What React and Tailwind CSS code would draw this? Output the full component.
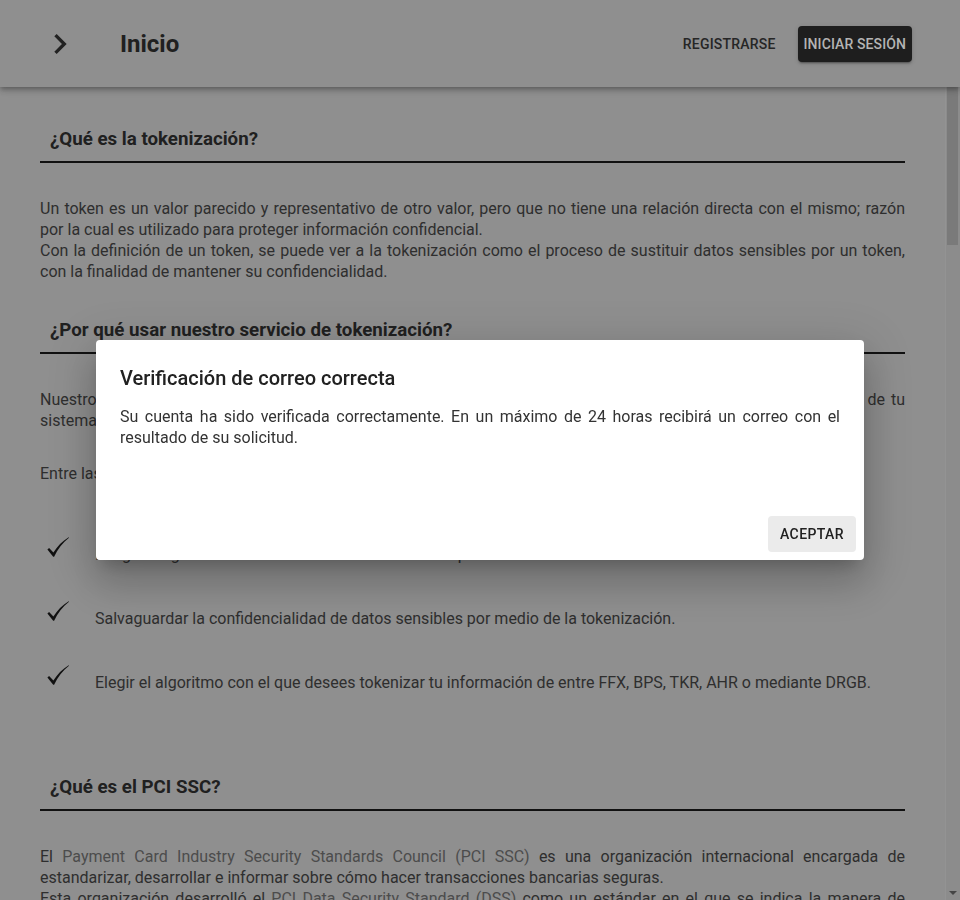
import React from "react";

const Check = () => (
  <span className="w-[55px] pl-[7px] mb-[14px] flex">
    <svg viewBox="0 0 22 20" className="w-[22px] h-[20px]" fill="#111">
      <path d="M0.4 12.4 L2.1 11.1 L6.4 15.6 C10.2 9.4 15.2 4.1 21.7 0.2 L22 0.7 C15.6 5.6 10.7 12 7.1 19.8 L6.2 19.8 Z" />
    </svg>
  </span>
);

const Heading = ({ children }) => (
  <h2 className="px-[10px] pb-[10px] text-[18.72px] leading-[24px] font-bold text-[#202020] border-b-2 border-[#111]">
    {children}
  </h2>
);

const ventajas = [
  "Integrar seguridad a tu sistema de manera sencilla por medio de nuestra API de tokenización.",
  "Salvaguardar la confidencialidad de datos sensibles por medio de la tokenización.",
  "Elegir el algoritmo con el que desees tokenizar tu información de entre FFX, BPS, TKR, AHR o mediante DRGB.",
];

export default function App() {
  return (
    <div className="relative h-[900px] overflow-hidden bg-[#8f8f8f] font-['Roboto',sans-serif] text-[#2e2e2e]">
      <header className="relative z-10 h-[87px] flex items-center pt-[1px] bg-[#8f8f8f] shadow-[0_2px_4px_-1px_rgba(0,0,0,0.2),0_4px_5px_0_rgba(0,0,0,0.14),0_1px_10px_0_rgba(0,0,0,0.12)]">
        <button className="ml-[40px] w-[40px] h-[40px] text-[#222]">
          <svg viewBox="0 0 24 24" className="w-[40px] h-[40px]" fill="currentColor">
            <path d="M10 6 8.59 7.41 13.17 12l-4.58 4.59L10 18l6-6z" />
          </svg>
        </button>
        <h1 className="ml-[40px] text-[24px] leading-[32px] font-bold text-[#202020]">
          Inicio
        </h1>
        <nav className="ml-auto mr-[48px] flex items-center gap-[14px]">
          <button className="h-9 px-2 text-[14px] font-medium uppercase tracking-[0.2px] text-[#262626]">
            Registrarse
          </button>
          <button className="h-9 px-[6px] rounded bg-[#1e1e1e] text-[14px] font-medium uppercase tracking-[0.1px] text-[#b4b4b4] shadow-[0_3px_1px_-2px_rgba(0,0,0,0.2),0_2px_2px_0_rgba(0,0,0,0.14),0_1px_5px_0_rgba(0,0,0,0.12)]">
            Iniciar sesión
          </button>
        </nav>
      </header>

      <div className="h-[813px] flex">
        <main className="flex-1 overflow-hidden">
          <div className="px-10 pt-[40px] pb-[60px] text-[16px] leading-[21px]">
            <section>
              <Heading>¿Qué es la tokenización?</Heading>
              <div className="mt-[35px] text-justify">
                <p>
                  Un token es un valor parecido y representativo de otro valor, pero que no tiene una relación directa con el mismo; razón por la cual es utilizado para proteger información confidencial.
                </p>
                <p>
                  Con la definición de un token, se puede ver a la tokenización como el proceso de sustituir datos sensibles por un token, con la finalidad de mantener su confidencialidad.
                </p>
              </div>
            </section>

            <section className="mt-[36px]">
              <Heading>¿Por qué usar nuestro servicio de tokenización?</Heading>
              <p className="mt-[35px] text-justify">
                Nuestro servicio de tokenización permite proteger la información sensible de tus clientes y mejorar la seguridad de tu sistema, además de ayudarte a cumplir con los requisitos del estándar PCI DSS.
              </p>
              <p className="mt-[32px]">Entre las ventajas que ofrecemos se encuentran:</p>
              <ul className="mt-[38px]">
                {ventajas.map((v) => (
                  <li key={v} className="h-16 flex items-center">
                    <Check />
                    <span>{v}</span>
                  </li>
                ))}
              </ul>
            </section>

            <section className="mt-[61px]">
              <Heading>¿Qué es el PCI SSC?</Heading>
              <div className="mt-[35px] text-justify">
                <p>
                  El <span className="text-[#4c4c4c]">Payment Card Industry Security Standards Council (PCI SSC)</span> es una organización internacional encargada de estandarizar, desarrollar e informar sobre cómo hacer transacciones bancarias seguras.
                </p>
                <p>
                  Esta organización desarrolló el <span className="text-[#4c4c4c]">PCI Data Security Standard (DSS)</span> como un estándar en el que se indica la manera de proteger los datos de los tarjetahabientes durante su almacenamiento, procesamiento y transmisión.
                </p>
              </div>
            </section>
          </div>
        </main>

        {/* scrollbar */}
        <div className="w-[15px] flex flex-col bg-[#8c8c8c] border-l border-[#939393]">
          <div className="h-[158px] ml-[1px] mr-[2px] bg-[#7a7a7a]" />
          <div className="flex-1" />
          <div className="h-[15px] flex items-center justify-center">
            <svg viewBox="0 0 8 4" className="w-[8px] h-[4px]" fill="#454545">
              <path d="M0 0 H8 L4 4 Z" />
            </svg>
          </div>
        </div>
      </div>

      <div className="fixed inset-0 z-20 flex items-center justify-center">
        <div className="w-[768px] h-[220px] flex flex-col bg-white rounded shadow-[0_11px_15px_-7px_rgba(0,0,0,0.2),0_24px_38px_3px_rgba(0,0,0,0.14),0_9px_46px_8px_rgba(0,0,0,0.12)]">
          <h2 className="px-6 pt-[22px] text-[20px] leading-[32px] font-medium text-[#212121]">
            Verificación de correo correcta
          </h2>
          <p className="mt-[12px] px-6 flex-1 text-[16px] leading-[21px] text-justify text-[#333]">
            Su cuenta ha sido verificada correctamente. En un máximo de 24 horas recibirá un correo con el resultado de su solicitud.
          </p>
          <div className="p-2 flex justify-end">
            <button className="h-9 w-[88px] rounded bg-[#ebebeb] text-[14px] font-medium uppercase tracking-[0.4px] text-[#212121]">
              Aceptar
            </button>
          </div>
        </div>
      </div>
    </div>
  );
}
